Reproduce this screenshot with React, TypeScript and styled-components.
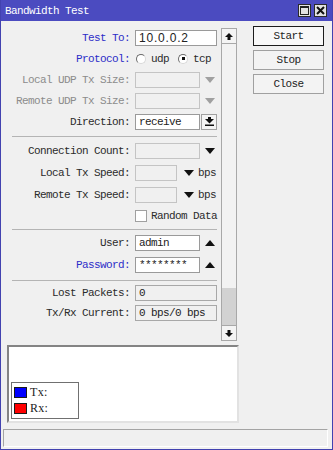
import React from "react";
import styled, { createGlobalStyle } from "styled-components";

const Global = createGlobalStyle`
  html, body { margin: 0; padding: 0; background: #f0f0f0; }
  #root { width: 333px; height: 450px; }
`;

const Window = styled.div`
  width: 333px;
  height: 450px;
  box-sizing: border-box;
  border: 1px solid #4242b0;
  border-top: none;
  background: #f0f0f0;
  display: flex;
  flex-direction: column;
  font-family: "Liberation Mono", "DejaVu Sans Mono", monospace;
  font-size: 11px;
  letter-spacing: -0.6px;
  color: #2b2b2b;
  overflow: hidden;
`;

const TitleBar = styled.div`
  height: 21px;
  flex: none;
  background: #4b4bc0;
  color: #ffffff;
  display: flex;
  align-items: center;
  justify-content: space-between;
  padding: 0 6px 0 5px;
  margin: 0 -1px;
`;

const TitleText = styled.span`
  font-size: 11px;
  letter-spacing: -0.6px;
`;

const TitleButtons = styled.div`
  display: flex;
  gap: 3px;
`;

const TitleButton = styled.div`
  width: 13px;
  height: 13px;
  box-sizing: border-box;
  background: #e2e2e2;
  border: 1px solid #2a2a2a;
  display: flex;
  align-items: center;
  justify-content: center;
`;

const Main = styled.div`
  height: 320px;
  flex: none;
  display: flex;
`;

const Form = styled.div`
  width: 220px;
  flex: none;
  padding-top: 6px;
  box-sizing: border-box;
  display: flex;
  flex-direction: column;
`;

const Row = styled.div<{ $h: number }>`
  height: ${(p) => p.$h}px;
  flex: none;
  display: flex;
  align-items: center;
`;

type Tone = "normal" | "blue" | "dim";

const Label = styled.div<{ $tone?: Tone }>`
  width: 129px;
  margin-right: 5px;
  flex: none;
  text-align: right;
  white-space: nowrap;
  color: ${(p) =>
    p.$tone === "blue" ? "#2d2dc8" : p.$tone === "dim" ? "#8c8c8c" : "#2b2b2b"};
`;

const Field = styled.div`
  display: flex;
  align-items: center;
`;

type InputKind = "white" | "empty" | "readonly";

const Input = styled.div<{ $w: number; $kind?: InputKind; $sans?: boolean }>`
  width: ${(p) => p.$w}px;
  height: 16px;
  box-sizing: border-box;
  flex: none;
  padding: 0 3px;
  line-height: 14px;
  white-space: nowrap;
  overflow: hidden;
  background: ${(p) => (p.$kind === "white" ? "#ffffff" : "#f0f0f0")};
  border: 1px solid
    ${(p) =>
      p.$kind === "white" ? "#9a9a9a" : p.$kind === "readonly" ? "#a8a8a8" : "#c4c4c4"};
  font-family: ${(p) => (p.$sans ? `"Liberation Sans", Arial, sans-serif` : "inherit")};
  font-size: ${(p) => (p.$sans ? "12px" : "11px")};
  letter-spacing: ${(p) => (p.$sans ? "0.8px" : "-0.6px")};
  color: #222;
`;

const TriWrap = styled.svg<{ $gap: number }>`
  margin-left: ${(p) => p.$gap}px;
  flex: none;
  display: block;
`;

const Tri = ({ up, dim, gap = 5 }: { up?: boolean; dim?: boolean; gap?: number }) => (
  <TriWrap $gap={gap} width="10" height="6" viewBox="0 0 10 6">
    <polygon
      points={up ? "0,6 5,0 10,6" : "0,0 10,0 5,6"}
      fill={dim ? "#a0a0a0" : "#111111"}
    />
  </TriWrap>
);

const Unit = styled.span`
  margin-left: 4px;
`;

const SmallButton = styled.div`
  width: 16px;
  height: 16px;
  box-sizing: border-box;
  margin-left: 1px;
  border: 1px solid #a0a0a0;
  background: #f4f4f4;
  display: flex;
  align-items: center;
  justify-content: center;
`;

const Radio = styled.span<{ $on?: boolean }>`
  width: 10px;
  height: 10px;
  box-sizing: border-box;
  border-radius: 50%;
  background: #ffffff;
  border: 1px solid;
  border-color: #6a6a6a #d8d8d8 #d8d8d8 #6a6a6a;
  display: inline-flex;
  align-items: center;
  justify-content: center;
  flex: none;
  &::after {
    content: "";
    width: 3px;
    height: 3px;
    background: #111;
    display: ${(p) => (p.$on ? "block" : "none")};
  }
`;

const Choice = styled.span<{ $first?: boolean }>`
  display: flex;
  align-items: center;
  gap: 5px;
  margin-left: ${(p) => (p.$first ? 1 : 9)}px;
`;

const Checkbox = styled.span`
  width: 12px;
  height: 12px;
  box-sizing: border-box;
  background: #ffffff;
  border: 1px solid #a0a0a0;
  flex: none;
  margin-right: 4px;
`;

const Separator = styled.div<{ $mt: number; $mb: number }>`
  height: 1px;
  flex: none;
  margin: ${(p) => p.$mt}px 0 ${(p) => p.$mb}px 11px;
  width: 205px;
  background: #b4b4b4;
`;

const Scrollbar = styled.div`
  width: 16px;
  height: 313px;
  margin-top: 7px;
  box-sizing: border-box;
  flex: none;
  display: flex;
  flex-direction: column;
  border-left: 1px solid #a8a8a8;
  border-right: 1px solid #a8a8a8;
`;

const ScrollButton = styled.div`
  height: 16px;
  flex: none;
  box-sizing: border-box;
  border-top: 1px solid #a8a8a8;
  border-bottom: 1px solid #a8a8a8;
  background: #f4f4f4;
  display: flex;
  align-items: center;
  justify-content: center;
`;

const Track = styled.div`
  flex: 1;
  background: #f2f2f2;
  display: flex;
  flex-direction: column;
  justify-content: flex-end;
`;

const Thumb = styled.div`
  height: 37px;
  background: #d2d2d2;
`;

const ButtonCol = styled.div`
  margin-left: 16px;
  padding-top: 5px;
  display: flex;
  flex-direction: column;
  gap: 4px;
`;

const Button = styled.div<{ $primary?: boolean }>`
  width: 71px;
  height: 20px;
  box-sizing: border-box;
  border: 1px solid ${(p) => (p.$primary ? "#1c1c1c" : "#a0a0a0")};
  background: ${(p) => (p.$primary ? "#f8f8f8" : "#f3f3f3")};
  display: flex;
  align-items: center;
  justify-content: center;
  color: #222;
`;

const Graph = styled.div`
  margin: 4px 0 0 6px;
  width: 232px;
  height: 78px;
  box-sizing: border-box;
  flex: none;
  background: #ffffff;
  border: 2px solid;
  border-color: #848484 #e2e2e2 #e2e2e2 #848484;
  display: flex;
  align-items: flex-end;
  padding: 0 0 2px 2px;
`;

const Legend = styled.div`
  width: 68px;
  height: 37px;
  box-sizing: border-box;
  border: 1px solid #707070;
  background: #ffffff;
  padding: 4px 2px;
  display: flex;
  flex-direction: column;
  gap: 5px;
`;

const LegendRow = styled.div`
  height: 11px;
  display: flex;
  align-items: center;
`;

const Swatch = styled.span<{ $color: string }>`
  width: 13px;
  height: 11px;
  box-sizing: border-box;
  border: 1px solid #1a1a1a;
  background: ${(p) => p.$color};
  flex: none;
`;

const LegendText = styled.span`
  margin-left: 3px;
  font-family: "Liberation Serif", "Times New Roman", serif;
  font-size: 12px;
  letter-spacing: 0.3px;
  color: #222;
`;

const StatusBar = styled.div`
  margin: 6px 4px 0 2px;
  height: 18px;
  flex: none;
  box-sizing: border-box;
  border: 1px solid;
  border-color: #a4a4a4 #ffffff #ffffff #a4a4a4;
  background: #f0f0f0;
`;

const ArrowIcon = ({ down }: { down?: boolean }) => (
  <svg width="8" height="7" viewBox="0 0 8 7" style={{ display: "block" }}>
    {down ? (
      <>
        <rect x="2.5" y="0" width="3" height="3" fill="#111" />
        <polygon points="0,3 8,3 4,7" fill="#111" />
      </>
    ) : (
      <>
        <polygon points="0,4 4,0 8,4" fill="#111" />
        <rect x="2.5" y="4" width="3" height="3" fill="#111" />
      </>
    )}
  </svg>
);

const DropToBarIcon = () => (
  <svg width="9" height="9" viewBox="0 0 9 9" style={{ display: "block" }}>
    <rect x="3" y="0" width="3" height="2" fill="#111" />
    <polygon points="0,2 9,2 4.5,6.5" fill="#111" />
    <rect x="0" y="7.5" width="9" height="1.5" fill="#111" />
  </svg>
);

export default function App() {
  return (
    <>
      <Global />
      <Window>
        <TitleBar>
          <TitleText>Bandwidth Test</TitleText>
          <TitleButtons>
            <TitleButton>
              <svg width="9" height="9" viewBox="0 0 9 9" style={{ display: "block" }}>
                <rect x="0.5" y="0.5" width="8" height="8" fill="none" stroke="#222" />
                <rect x="0" y="0" width="9" height="2" fill="#222" />
              </svg>
            </TitleButton>
            <TitleButton>
              <svg width="9" height="9" viewBox="0 0 9 9" style={{ display: "block" }}>
                <path d="M1 1 L8 8 M8 1 L1 8" stroke="#111" strokeWidth="2" />
              </svg>
            </TitleButton>
          </TitleButtons>
        </TitleBar>

        <Main>
          <Form>
            <Row $h={21}>
              <Label $tone="blue">Test To:</Label>
              <Field>
                <Input $w={82} $kind="white" $sans>
                  10.0.0.2
                </Input>
              </Field>
            </Row>
            <Row $h={21}>
              <Label $tone="blue">Protocol:</Label>
              <Field>
                <Choice $first>
                  <Radio />
                  udp
                </Choice>
                <Choice>
                  <Radio $on />
                  tcp
                </Choice>
              </Field>
            </Row>
            <Row $h={21}>
              <Label $tone="dim">Local UDP Tx Size:</Label>
              <Field>
                <Input $w={65} $kind="empty" />
                <Tri dim />
              </Field>
            </Row>
            <Row $h={21}>
              <Label $tone="dim">Remote UDP Tx Size:</Label>
              <Field>
                <Input $w={65} $kind="empty" />
                <Tri dim />
              </Field>
            </Row>
            <Row $h={21}>
              <Label>Direction:</Label>
              <Field>
                <Input $w={65} $kind="white">
                  receive
                </Input>
                <SmallButton>
                  <DropToBarIcon />
                </SmallButton>
              </Field>
            </Row>

            <Separator $mt={4} $mb={3} />

            <Row $h={22}>
              <Label>Connection Count:</Label>
              <Field>
                <Input $w={65} $kind="empty" />
                <Tri />
              </Field>
            </Row>
            <Row $h={22}>
              <Label>Local Tx Speed:</Label>
              <Field>
                <Input $w={42} $kind="empty" />
                <Tri gap={7} />
                <Unit>bps</Unit>
              </Field>
            </Row>
            <Row $h={22}>
              <Label>Remote Tx Speed:</Label>
              <Field>
                <Input $w={42} $kind="empty" />
                <Tri gap={7} />
                <Unit>bps</Unit>
              </Field>
            </Row>
            <Row $h={19}>
              <Label />
              <Field>
                <Checkbox />
                Random Data
              </Field>
            </Row>

            <Separator $mt={4} $mb={2} />

            <Row $h={22}>
              <Label>User:</Label>
              <Field>
                <Input $w={65} $kind="white">
                  admin
                </Input>
                <Tri up />
              </Field>
            </Row>
            <Row $h={22}>
              <Label $tone="blue">Password:</Label>
              <Field>
                <Input $w={65} $kind="white">
                  ********
                </Input>
                <Tri up />
              </Field>
            </Row>

            <Separator $mt={4} $mb={2} />

            <Row $h={20}>
              <Label>Lost Packets:</Label>
              <Field>
                <Input $w={82} $kind="readonly">
                  0
                </Input>
              </Field>
            </Row>
            <Row $h={20}>
              <Label>Tx/Rx Current:</Label>
              <Field>
                <Input $w={82} $kind="readonly">
                  0 bps/0 bps
                </Input>
              </Field>
            </Row>
          </Form>

          <Scrollbar>
            <ScrollButton>
              <ArrowIcon />
            </ScrollButton>
            <Track>
              <Thumb />
            </Track>
            <ScrollButton>
              <ArrowIcon down />
            </ScrollButton>
          </Scrollbar>

          <ButtonCol>
            <Button $primary>Start</Button>
            <Button>Stop</Button>
            <Button>Close</Button>
          </ButtonCol>
        </Main>

        <Graph>
          <Legend>
            <LegendRow>
              <Swatch $color="#0000ff" />
              <LegendText>Tx:</LegendText>
            </LegendRow>
            <LegendRow>
              <Swatch $color="#ff0000" />
              <LegendText>Rx:</LegendText>
            </LegendRow>
          </Legend>
        </Graph>

        <StatusBar />
      </Window>
    </>
  );
}
